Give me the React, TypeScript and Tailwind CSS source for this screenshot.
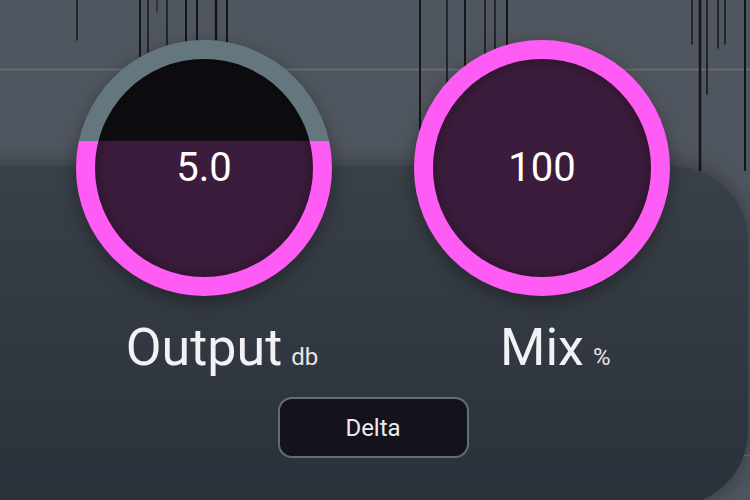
import React from 'react'

// spectrogram streaks in the top strip: [x, yEnd, width]
const STREAKS: [number, number, number][] = [
  [77, 40, 1.5], [140, 56, 2], [148, 52, 1.5], [157, 12, 1], [167, 45, 1.5], [186, 42, 2],
  [197, 42, 2], [216, 42, 2.5], [227, 42, 2],
  [420, 170, 2], [447, 90, 1.5], [465, 70, 2], [485, 60, 1.5], [495, 60, 1.5], [507, 60, 2],
  [692, 44, 1.5], [700, 172, 2.5], [707, 94, 1.5], [718, 48, 1.5], [725, 44, 1.5], [745, 170, 2],
]

function Knob({ value, fillTop }: { value: string; fillTop: number }) {
  return (
    <div
      className="relative h-[256px] w-[256px] shrink-0 rounded-full p-[19px] shadow-[0_6px_18px_rgba(0,0,0,0.35)]"
      style={{ background: `linear-gradient(to bottom, #64777e ${fillTop}px, #ff5cf6 ${fillTop}px)` }}
    >
      <div
        className="flex h-full w-full items-center justify-center rounded-full shadow-[inset_0_0_14px_rgba(0,0,0,0.4)]"
        style={{ background: `linear-gradient(to bottom, #0e0d11 ${fillTop - 19}px, #3c1c3c ${fillTop - 19}px)` }}
      >
        <span className="text-[40px] leading-none text-white">{value}</span>
      </div>
    </div>
  )
}

function Label({ name, unit, unitW }: { name: string; unit: string; unitW: string }) {
  return (
    <div className="mt-[26px] flex h-[52px] items-baseline justify-center leading-[52px] text-[#f2f2f4]">
      <span className={unitW} />
      <span className="text-[52px]">{name}</span>
      <span className={`${unitW} pl-[9px] text-[24px] text-[#e6e6ea]`}>{unit}</span>
    </div>
  )
}

export default function App() {
  return (
    <div className="relative h-[500px] w-[750px] overflow-hidden bg-[#50565f] font-['Roboto',sans-serif]">
      {/* backdrop: grid + spectrogram */}
      <svg className="absolute inset-0" width="750" height="500">
        <line x1="0" y1="69.5" x2="750" y2="69.5" stroke="#6b7079" strokeWidth="1.5" />
        <line x1="0" y1="455.5" x2="750" y2="455.5" stroke="#6b7079" strokeWidth="1.5" />
        {STREAKS.map(([x, y2, w], i) => (
          <line key={i} x1={x} y1="0" x2={x} y2={y2} stroke="#15161a" strokeWidth={w} strokeLinecap="round" />
        ))}
      </svg>

      {/* control panel */}
      <div className="absolute left-[-40px] top-[166px] h-[340px] w-[788px] rounded-r-[75px] bg-gradient-to-b from-[#3a4048] to-[#2b313a] shadow-[0_0_24px_rgba(0,0,0,0.35)]" />

      <div className="relative pl-[76px] pt-[40px]">
        <div className="flex w-[594px] gap-[82px]">
          <div className="flex w-[256px] flex-col">
            <Knob value="5.0" fillTop={101} />
            <Label name="Output" unit="db" unitW="w-[38px]" />
          </div>
          <div className="flex w-[256px] flex-col">
            <Knob value="100" fillTop={0} />
            <Label name="Mix" unit="%" unitW="w-[27px]" />
          </div>
        </div>
        <div className="mt-[23px] flex w-[594px] justify-center">
          <button className="flex h-[61px] w-[191px] items-center justify-center rounded-[14px] border-2 border-[#5f6f76] bg-[#14121b] text-[24px] font-normal text-[#ececef]">
            Delta
          </button>
        </div>
      </div>
    </div>
  )
}
